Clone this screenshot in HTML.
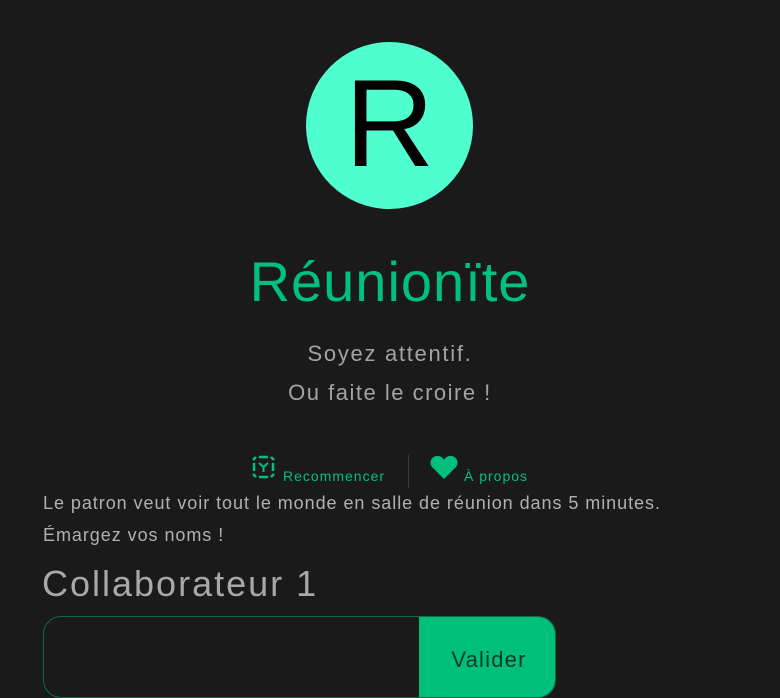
<!DOCTYPE html>
<html><head><meta charset="utf-8"><style>
body{margin:0;background:#1a1a1a;width:780px;height:680px;overflow:hidden;position:relative;font-family:"Liberation Sans","DejaVu Sans",sans-serif}
.a{position:absolute;white-space:nowrap}
</style></head><body>
<div class="a" style="left:306px;top:42px;width:167px;height:167px;border-radius:50%;background:#4fffcf;"></div>
<div class="a" style="left:306px;top:54px;width:167px;text-align:center;font-size:124px;line-height:140px;color:#000">R</div>
<div class="a" style="left:0;width:780px;top:250px;text-align:center;font-size:56px;line-height:64px;color:#00c07e;letter-spacing:1px">Réunionïte</div>
<div class="a" style="left:0;width:780px;top:341px;text-align:center;font-size:22px;line-height:26px;color:#a3a3a3;letter-spacing:1.7px">Soyez attentif.</div>
<div class="a" style="left:0;width:780px;top:380px;text-align:center;font-size:22px;line-height:26px;color:#a3a3a3;letter-spacing:1.5px">Ou faite le croire !</div>
<svg class="a" style="left:251px;top:455px" width="25" height="24" viewBox="0 0 25 24" fill="none" stroke="#00c07e" stroke-width="2.5">
<path d="M8 2h9M3 8v8M22 8v8M8 22h9M2 5l3-3M20 2l3 3M2 19l3 3M20 22l3-3"/><path d="M8 8l4.5 4 4.5-4M12.5 12v5" stroke-width="2"/></svg>
<div class="a" style="left:283px;top:467px;font-size:14px;line-height:18px;color:#00c07e;letter-spacing:1px">Recommencer</div>
<div class="a" style="left:408px;top:455px;width:1px;height:33px;background:#3a3a3a"></div>
<svg class="a" style="left:430px;top:455px" width="28" height="24" viewBox="0 0 28 24"><path d="M14 24L2.5 12.5C-1 9 0 2 6.5 1c3.5-.5 6 1.5 7.5 4 1.5-2.5 4-4.5 7.5-4 6.5 1 7.5 8 4 11.5z" fill="#00c07e"/></svg>
<div class="a" style="left:464px;top:467px;font-size:14px;line-height:18px;color:#00c07e;letter-spacing:1px">À propos</div>
<div class="a" style="left:43px;top:491px;font-size:18px;line-height:24px;color:#b0b0b0;letter-spacing:0.95px">Le patron veut voir tout le monde en salle de réunion dans 5 minutes.</div>
<div class="a" style="left:43px;top:523px;font-size:18px;line-height:24px;color:#b0b0b0;letter-spacing:0.95px">Émargez vos noms !</div>
<div class="a" style="left:42px;top:562px;font-size:36px;line-height:44px;color:#a8a8a8;letter-spacing:2px">Collaborateur 1</div>
<div class="a" style="left:43px;top:616px;width:511px;height:80px;border:1px solid #0f6a48;border-radius:18px;overflow:hidden;">
<div class="a" style="left:375px;top:0;width:140px;height:80px;background:#00bf7a;"></div>
<div class="a" style="left:375px;top:30px;width:140px;text-align:center;font-size:22px;color:#0b3a28;letter-spacing:1.2px">Valider</div>
</div>
</body></html>
